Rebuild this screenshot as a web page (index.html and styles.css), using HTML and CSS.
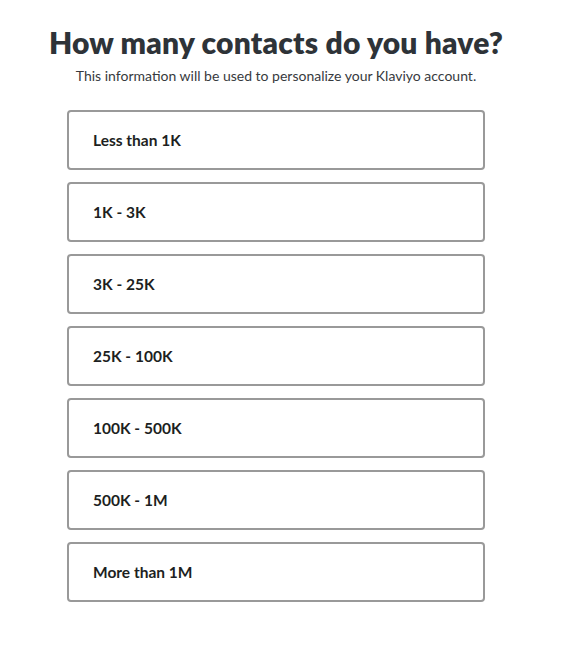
FILE: index.html
```html
<!DOCTYPE html>
<html lang="en">
<head>
    <meta charset="UTF-8">
    <title>Klaviyo - Contacts</title>
    <link rel="stylesheet" href="styles.css">
</head>
<body>
    <main class="page">
        <h1 class="title">How many contacts do you have?</h1>
        <p class="subtitle">This information will be used to personalize your Klaviyo account.</p>
        <div class="options">
            <button class="option">Less than 1K</button>
            <button class="option">1K - 3K</button>
            <button class="option">3K - 25K</button>
            <button class="option">25K - 100K</button>
            <button class="option">100K - 500K</button>
            <button class="option">500K - 1M</button>
            <button class="option">More than 1M</button>
        </div>
    </main>
</body>
</html>
```
FILE: styles.css
```css
body {
    margin: 0;
    background: #ffffff;
    font-family: Lato, 'Open Sans', Arial, sans-serif;
    color: #2e3338;
}
.page {
    width: 552px;
    padding-top: 24px;
    display: flex;
    flex-direction: column;
    align-items: center;
}
.title {
    margin: 0;
    font-size: 30px;
    font-weight: 800;
    line-height: 36px;
    letter-spacing: 0.2px;
}
.subtitle {
    margin: 7px 0 25px;
    font-size: 14px;
    line-height: 18px;
    color: #373a3e;
}
.options {
    display: flex;
    flex-direction: column;
    gap: 12px;
    width: 418px;
}
.option {
    height: 60px;
    padding: 0 0 0 24px;
    background: #ffffff;
    border: 2px solid #999999;
    border-radius: 4px;
    text-align: left;
    font-family: inherit;
    font-size: 15.5px;
    font-weight: 700;
    color: #1d1f22;
    cursor: pointer;
}
.option:hover { border-color: #666666; }
```
